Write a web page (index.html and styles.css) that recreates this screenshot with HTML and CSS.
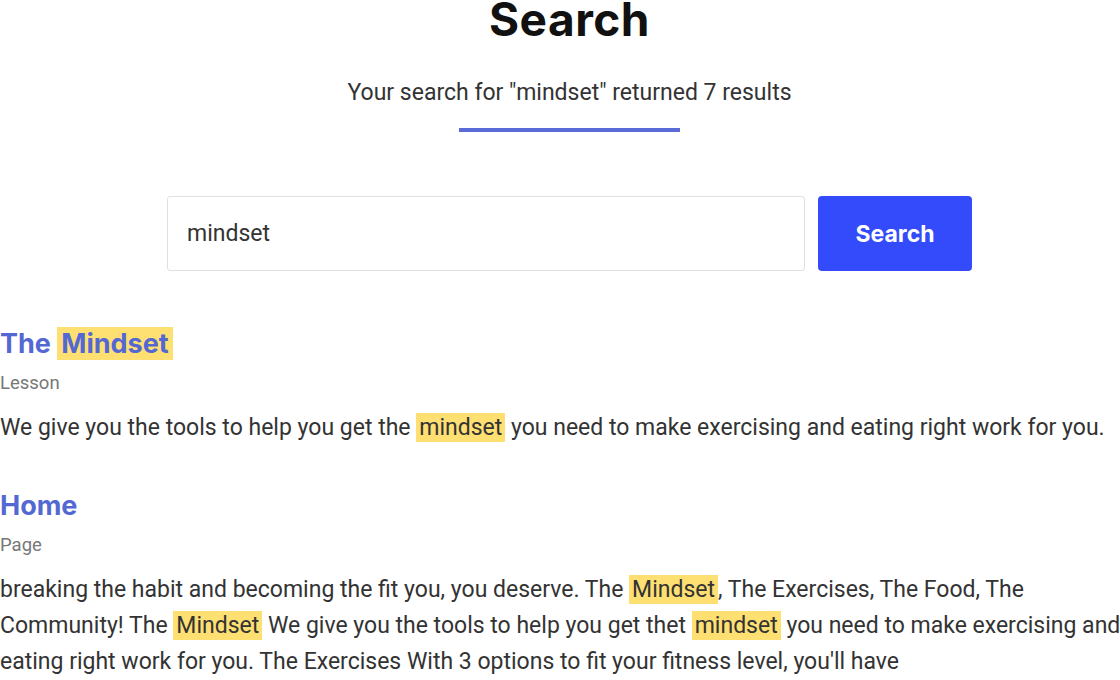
FILE: index.html
```html
<!DOCTYPE html>
<html lang="en">
<head>
    <meta charset="UTF-8">
    <meta name="viewport" content="width=device-width, initial-scale=1.0">
    <title>Search</title>
    <link rel="stylesheet" href="styles.css">
</head>
<body>
    <div class="page">
        <div class="page-header">
            <h1>Search</h1>
            <p class="summary">Your search for "mindset" returned 7 results</p>
            <div class="divider"></div>
        </div>

        <form class="search-form" onsubmit="return false;">
            <input type="text" class="search-input" value="mindset">
            <button type="submit" class="search-button">Search</button>
        </form>

        <div class="results">
            <div class="result">
                <h2 class="result-title"><a href="#">The <mark class="hl">Mindset</mark></a></h2>
                <div class="result-type">Lesson</div>
                <p class="result-text">We give you the tools to help you get the <mark class="hl">mindset</mark> you need to make exercising and eating right work for you.</p>
            </div>
            <div class="result">
                <h2 class="result-title"><a href="#">Home</a></h2>
                <div class="result-type">Page</div>
                <p class="result-text">breaking the habit and becoming the fit you, you deserve. The <mark class="hl">Mindset</mark>, The Exercises, The Food, The Community! The <mark class="hl">Mindset</mark> We give you the tools to help you get thet <mark class="hl">mindset</mark> you need to make exercising and eating right work for you. The Exercises With 3 options to fit your fitness level, you'll have</p>
            </div>
        </div>
    </div>
</body>
</html>
```

FILE: styles.css
```css
body {
    margin: 0;
    overflow-x: hidden;
    font-family: Roboto, "Liberation Sans", Arial, sans-serif;
    color: #333;
    background: #fff;
}
.page {
    width: 1139px;
}
.page-header {
    text-align: center;
}
h1 {
    font-family: Inter, "DejaVu Sans", sans-serif;
    font-weight: 700;
    font-size: 46px;
    line-height: 38px;
    margin: 0;
    color: #111;
    letter-spacing: 0.5px;
}
.summary {
    font-size: 23px;
    line-height: 28px;
    margin: 41px 0 0;
    color: #333;
}
.divider {
    width: 221px;
    height: 4px;
    background: #5a6ad6;
    margin: 21px auto 0;
}
.search-form {
    display: flex;
    justify-content: center;
    gap: 13px;
    margin-top: 64px;
}
.search-input {
    width: 638px;
    height: 75px;
    box-sizing: border-box;
    border: 1px solid #e0e0e0;
    border-radius: 3px;
    padding: 0 19px;
    font-family: Roboto, "Liberation Sans", Arial, sans-serif;
    font-size: 23px;
    color: #333;
    outline: none;
}
.search-button {
    width: 154px;
    height: 75px;
    border: none;
    border-radius: 4px;
    background: #334bfb;
    color: white;
    font-family: Inter, "DejaVu Sans", sans-serif;
    font-weight: 700;
    font-size: 23px;
    cursor: pointer;
}
.results {
    margin-top: 58px;
}
.result + .result {
    margin-top: 45px;
}
.result-title {
    margin: 0;
    font-family: Inter, "DejaVu Sans", sans-serif;
    font-weight: 700;
    font-size: 27px;
    line-height: 30px;
}
.result-title a {
    color: #5468d4;
    text-decoration: none;
}
.result-title .hl {
    padding: 0 4px;
}
.result-type {
    margin-top: 12px;
    font-size: 18.5px;
    line-height: 24px;
    color: #777;
}
.result-text {
    margin: 15px 0 0;
    font-size: 23px;
    line-height: 36px;
}
.hl {
    background: #fedf72;
    color: inherit;
    padding: 1px 3px;
}
```
